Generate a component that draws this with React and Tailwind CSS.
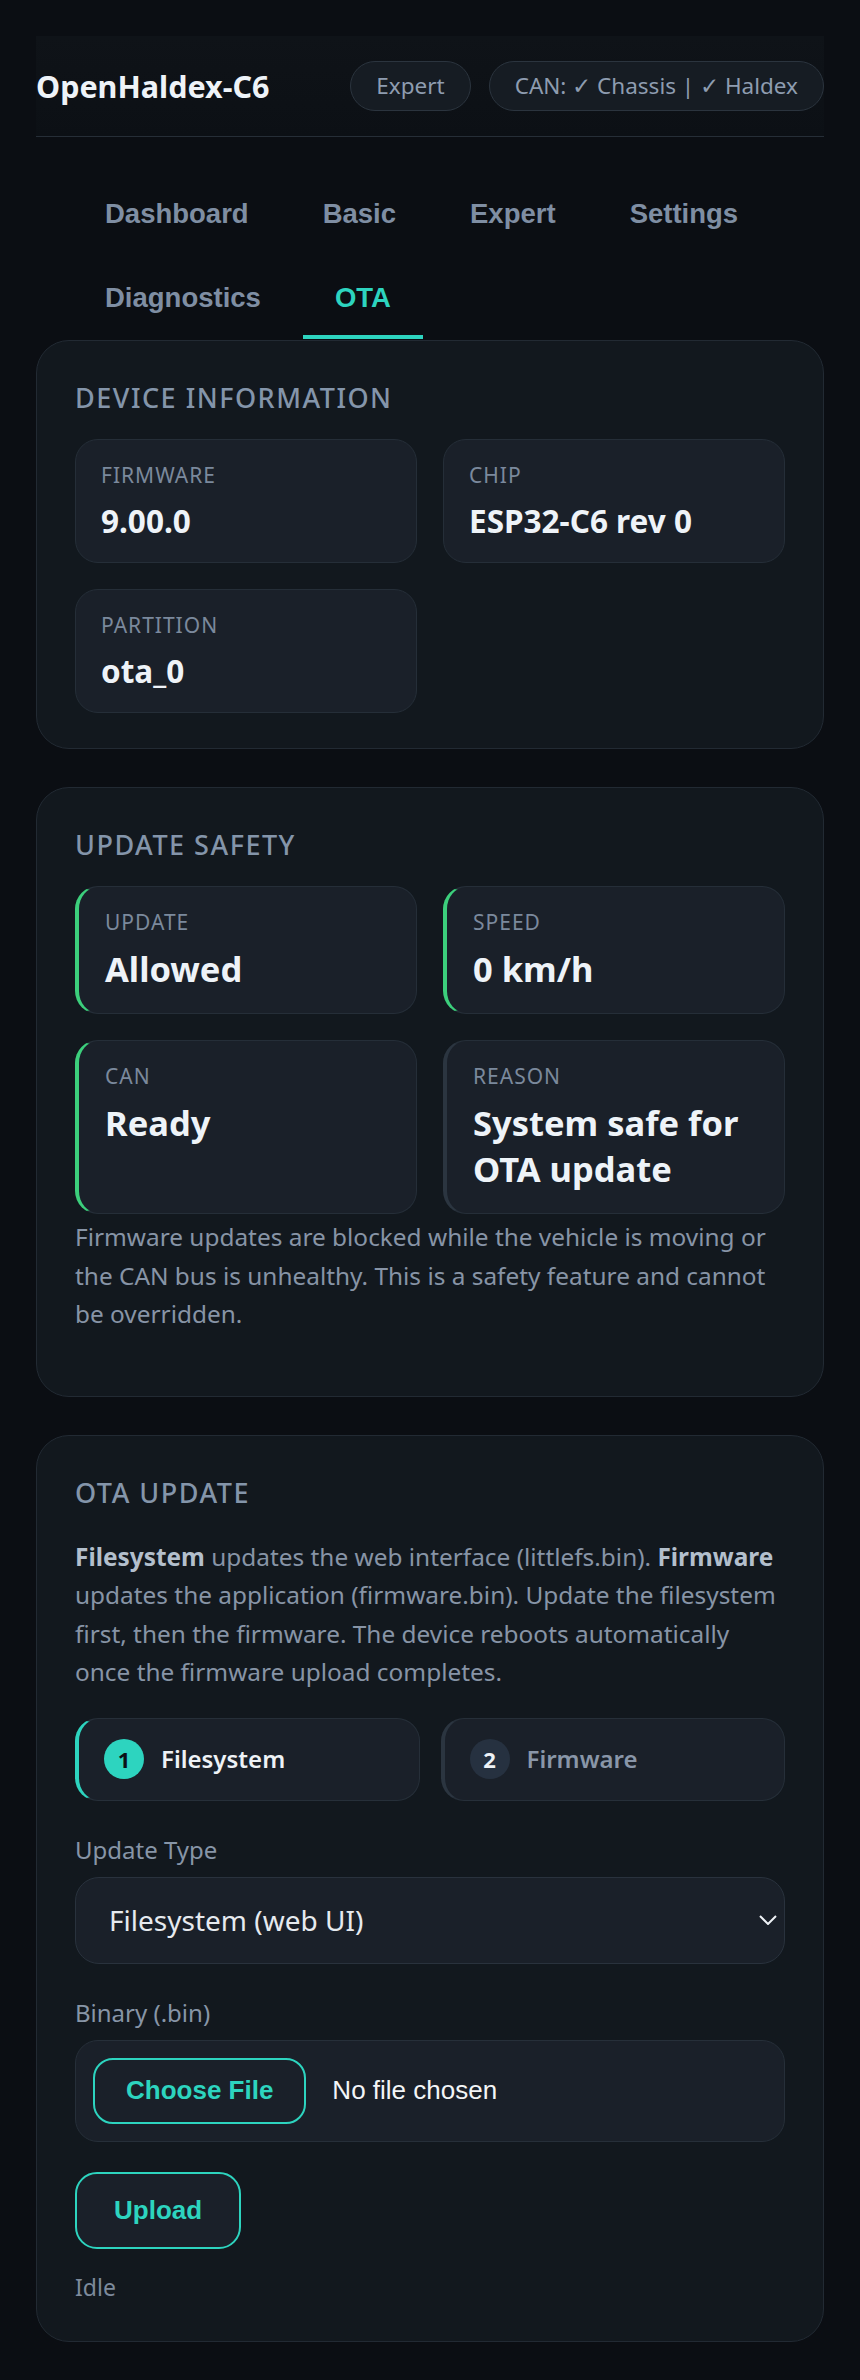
import React from 'react';

const tabs = ['Dashboard', 'Basic', 'Expert', 'Settings', 'Diagnostics', 'OTA'];

const InfoTile = ({ label, value }) => (
  <div className="rounded-[23px] border border-[#252e38] bg-[#1a2029] px-[25px] py-[21px]">
    <div className="text-[21px] leading-[28px] tracking-[1px] uppercase text-[#7b899c]">{label}</div>
    <div className="mt-[12px] text-[31.5px] font-bold leading-[40px] text-[#eef3f8]">{value}</div>
  </div>
);

const SafetyTile = ({ label, value, ok }) => (
  <div
    className={
      ok
        ? 'rounded-[23px] border border-[#252e38] border-l-4 border-l-[#3ccf7c] bg-[#1a2029] pl-[26px] pr-[25px] py-[21px]'
        : 'rounded-[23px] border border-[#252e38] border-l-4 border-l-[#2b3540] bg-[#1a2029] pl-[26px] pr-[25px] py-[21px]'
    }
  >
    <div className="text-[21px] leading-[28px] tracking-[1px] uppercase text-[#7b899c]">{label}</div>
    <div className="mt-[10px] text-[34.5px] font-bold leading-[46px] text-[#eef3f8]">{value}</div>
  </div>
);

const CardTitle = ({ children, className }) => (
  <h2 className={'text-[27px] font-medium leading-[38px] tracking-[1.5px] uppercase text-[#8495aa] ' + className}>
    {children}
  </h2>
);

export default function App() {
  return (
    <div className="min-h-screen bg-[#0b0e13] px-[36px] pt-[36px] pb-[38px] font-['Noto_Sans',sans-serif]">
      {/* header */}
      <header className="flex h-[101px] items-center justify-between border-b border-[#262e37] bg-linear-to-b from-[#0f1318] to-[#0c1015]">
        <h1 className="text-[30.5px] font-bold leading-none text-[#eef3f8]">OpenHaldex-C6</h1>
        <div className="flex gap-[18px]">
          <span className="flex h-[50px] items-center rounded-full border-[1.5px] border-[#2b343e] bg-[#161c23] px-[25px] text-[22.5px] text-[#8e9cb0]">
            Expert
          </span>
          <span className="flex h-[50px] items-center rounded-full border-[1.5px] border-[#2b343e] bg-[#161c23] px-[25px] text-[22.5px] text-[#8e9cb0]">
            CAN: ✓ Chassis | ✓ Haldex
          </span>
        </div>
      </header>

      {/* tabs */}
      <nav className="mt-[40px] mb-[1px] flex flex-wrap gap-x-[10px] gap-y-[6px] px-[37px]">
        {tabs.map((t) => (
          <button
            key={t}
            className={
              t === 'OTA'
                ? "border-b-4 border-[#2dd4bf] px-[32px] py-[21px] font-['Liberation_Sans',Arial,sans-serif] text-[27.5px] font-bold leading-[32px] text-[#2dd4bf]"
                : "border-b-4 border-transparent px-[32px] py-[21px] font-['Liberation_Sans',Arial,sans-serif] text-[27.5px] font-bold leading-[32px] text-[#7f8ea3]"
            }
          >
            {t}
          </button>
        ))}
      </nav>

      <div className="flex flex-col gap-[38px]">
        {/* device information */}
        <section className="rounded-[33px] border border-[#222a33] bg-[#12181e] px-[38px] pt-[38px] pb-[35px]">
          <CardTitle className="mb-[22px]">Device Information</CardTitle>
          <div className="grid grid-cols-2 gap-[26px]">
            <InfoTile label="Firmware" value="9.00.0" />
            <InfoTile label="Chip" value="ESP32-C6 rev 0" />
            <InfoTile label="Partition" value="ota_0" />
          </div>
        </section>

        {/* update safety */}
        <section className="rounded-[33px] border border-[#222a33] bg-[#12181e] p-[38px]">
          <CardTitle className="mb-[22px]">Update Safety</CardTitle>
          <div className="grid grid-cols-2 gap-[26px]">
            <SafetyTile label="Update" value="Allowed" ok />
            <SafetyTile label="Speed" value="0 km/h" ok />
            <SafetyTile label="CAN" value="Ready" ok />
            <SafetyTile label="Reason" value="System safe for OTA update" />
          </div>
          <p className="mt-[4px] mb-[24px] text-[24.4px] leading-[38.5px] text-[#8794a6]">
            Firmware updates are blocked while the vehicle is moving or the CAN bus is unhealthy. This is a safety
            feature and cannot be overridden.
          </p>
        </section>

        {/* ota update */}
        <section className="rounded-[33px] border border-[#222a33] bg-[#12181e] p-[38px]">
          <CardTitle className="mb-[26px]">OTA Update</CardTitle>
          <p className="text-[24.4px] leading-[38.5px] text-[#8794a6]">
            <b className="font-bold text-[#b3bfcc]">Filesystem</b> updates the web interface (littlefs.bin).{' '}
            <b className="font-bold text-[#b3bfcc]">Firmware</b> updates the application (firmware.bin). Update the
            filesystem first, then the firmware. The device reboots automatically once the firmware upload completes.
          </p>

          <div className="mt-[26px] grid grid-cols-2 gap-[21px]">
            <div className="flex h-[83px] items-center gap-[17px] rounded-[23px] border border-[#262f39] border-l-4 border-l-[#2dd4bf] bg-[#1a2029] pl-[25px]">
              <span className="flex h-[40px] w-[40px] items-center justify-center rounded-full bg-[#2dd4bf] text-[22px] font-bold text-[#0b1116]">
                1
              </span>
              <span className="text-[24px] font-semibold text-[#eef2f6]">Filesystem</span>
            </div>
            <div className="flex h-[83px] items-center gap-[17px] rounded-[23px] border border-[#262f39] border-l-4 border-l-[#2b3540] bg-[#1a2029] pl-[25px]">
              <span className="flex h-[40px] w-[40px] items-center justify-center rounded-full bg-[#263140] text-[22px] font-bold text-[#eef2f6]">
                2
              </span>
              <span className="text-[24px] font-semibold text-[#8996a8]">Firmware</span>
            </div>
          </div>

          <label className="mt-[31px] block text-[24px] leading-[36px] text-[#8795a7]">Update Type</label>
          <div className="relative mt-[9px]">
            <select className="h-[87px] w-full appearance-none rounded-[24px] border border-[#29323d] bg-[#1a2029] pl-[33px] text-[28px] text-[#e6eaef] outline-none">
              <option>Filesystem (web UI)</option>
              <option>Firmware (application)</option>
            </select>
            <svg
              className="pointer-events-none absolute right-[8px] top-1/2 -translate-y-1/2"
              width="18"
              height="10"
              viewBox="0 0 18 10"
              fill="none"
            >
              <path d="M1 1L9 9L17 1" stroke="#eef2f6" strokeWidth="2" />
            </svg>
          </div>

          <label className="mt-[31px] block text-[24px] leading-[36px] text-[#8795a7]">Binary (.bin)</label>
          <div className="mt-[9px] flex h-[102px] items-center gap-[26px] rounded-[23px] border border-[#262f39] bg-[#1a2029] px-[17px] font-['Liberation_Sans',Arial,sans-serif]">
            <button className="h-[66px] rounded-[20px] border-2 border-[#2dd4bf] px-[31px] text-[26px] font-bold text-[#2dd4bf]">
              Choose File
            </button>
            <span className="text-[26px] text-[#f3f5f7]">No file chosen</span>
          </div>

          <button className="mt-[30px] block h-[77px] rounded-[22px] border-2 border-[#2dd4bf] bg-[#1a2029] px-[37px] font-['Liberation_Sans',Arial,sans-serif] text-[26px] font-bold text-[#2dd4bf]">
            Upload
          </button>

          <div className="mt-[22px] text-[23px] leading-[32px] text-[#7d8a9b]">Idle</div>
        </section>
      </div>
    </div>
  );
}
